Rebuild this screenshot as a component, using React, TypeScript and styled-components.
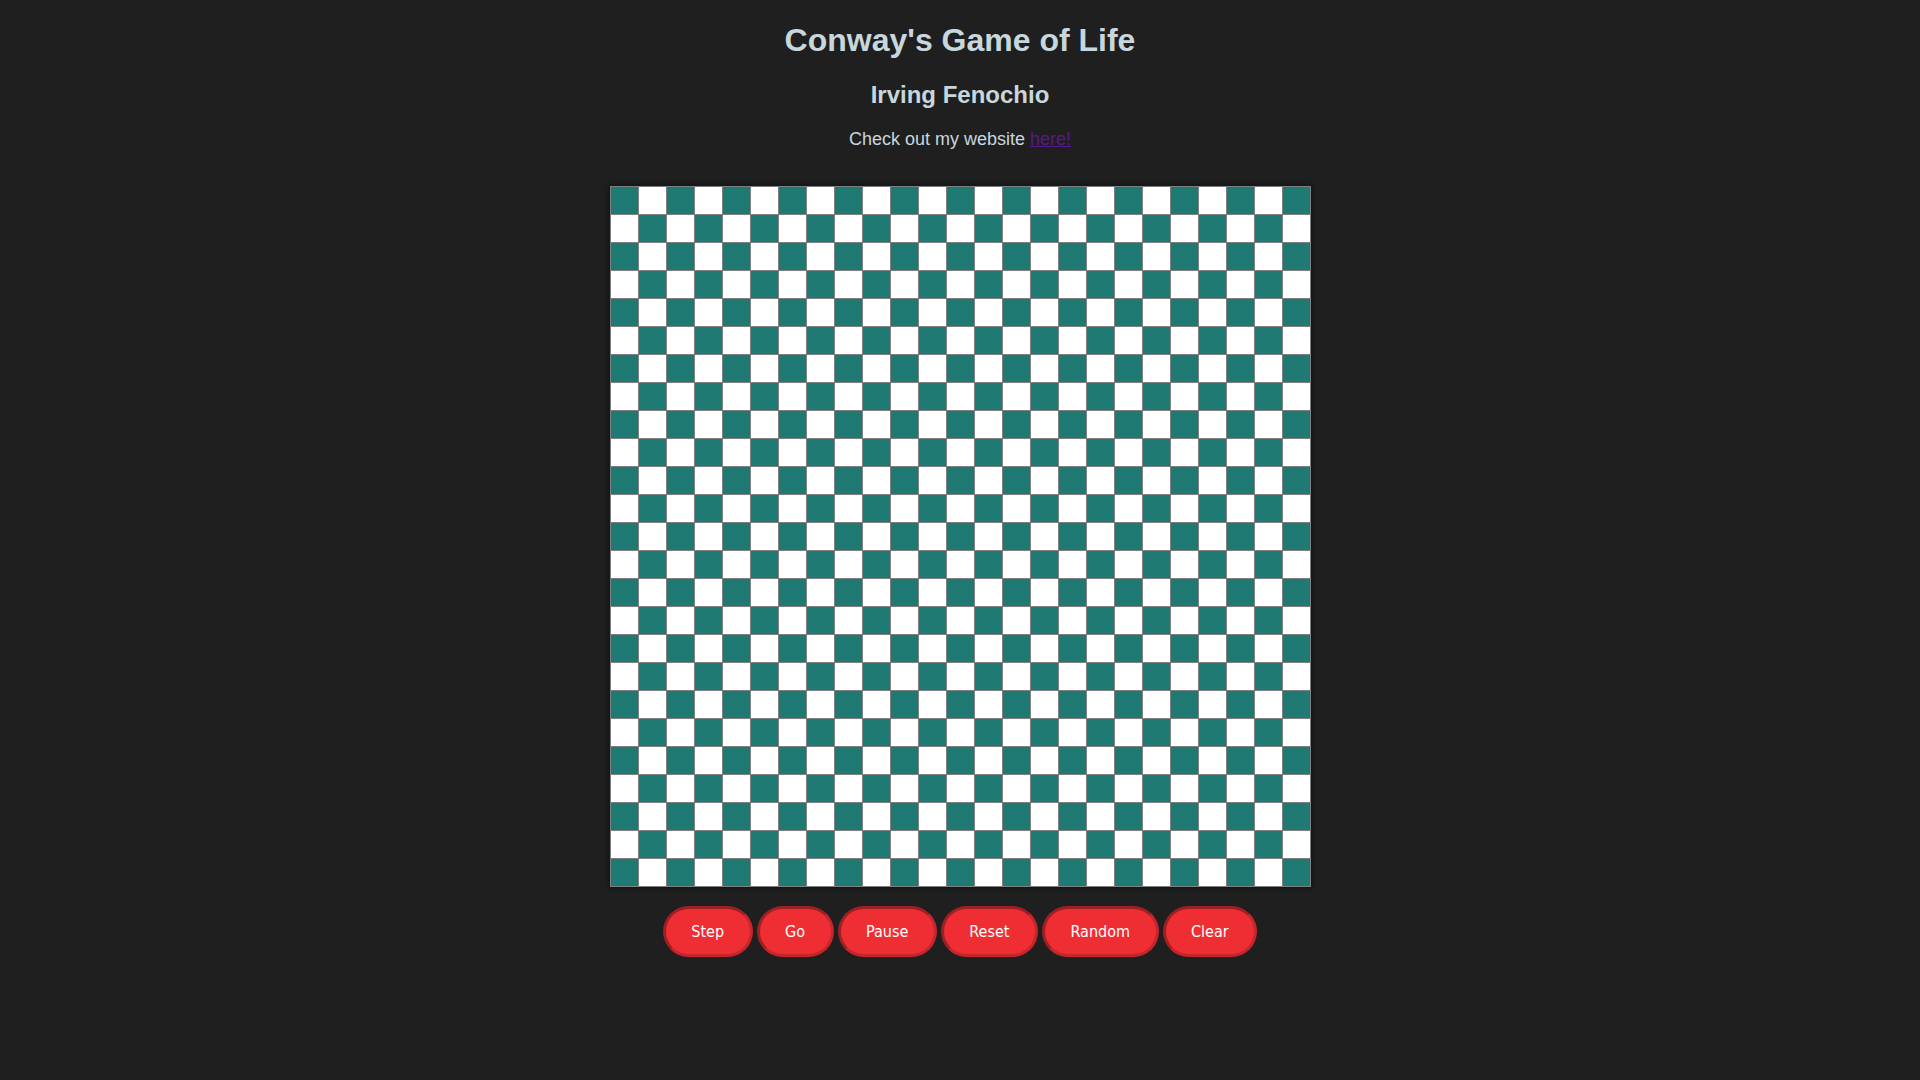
import styled, { createGlobalStyle } from "styled-components";

const SIZE = 25;

const GlobalStyle = createGlobalStyle`
  html, body {
    margin: 0;
    padding: 0;
    background-color: #1f1f1f;
  }
  body {
    min-height: 1080px;
    font-family: "Liberation Sans", Arial, sans-serif;
  }
`;

function App() {
  const cells = [];
  for (let r = 0; r < SIZE; r++) {
    for (let c = 0; c < SIZE; c++) {
      cells.push(<Cell key={`${r}-${c}`} alive={(r + c) % 2 === 0} />);
    }
  }

  return (
    <>
      <GlobalStyle />
      <StyledPage>
        <StyledTitle>Conway's Game of Life</StyledTitle>
        <StyledAuthor>Irving Fenochio</StyledAuthor>
        <StyledText>
          Check out my website <StyledLink href="#">here!</StyledLink>
        </StyledText>
        <StyledBoard>{cells}</StyledBoard>
        <StyledControls>
          <StyledButton>Step</StyledButton>
          <StyledButton>Go</StyledButton>
          <StyledButton>Pause</StyledButton>
          <StyledButton>Reset</StyledButton>
          <StyledButton>Random</StyledButton>
          <StyledButton>Clear</StyledButton>
        </StyledControls>
      </StyledPage>
    </>
  );
}

export default App;

const StyledPage = styled.div`
  display: flex;
  flex-direction: column;
  align-items: center;
  color: #c8d7de;
  padding-top: 22px;
`;

const StyledTitle = styled.h1`
  margin: 0;
  font-size: 32px;
  line-height: 37px;
  font-weight: bold;
`;

const StyledAuthor = styled.h2`
  margin: 22px 0 0;
  font-size: 24px;
  line-height: 28px;
  font-weight: bold;
`;

const StyledText = styled.p`
  margin: 20px 0 0;
  font-size: 18px;
  line-height: 21px;
`;

const StyledLink = styled.a`
  color: #551a8b;
  text-decoration: underline;
`;

const StyledBoard = styled.div`
  margin-top: 36px;
  display: grid;
  grid-template-columns: repeat(${SIZE}, 27px);
  grid-auto-rows: 27px;
  gap: 1px;
  padding: 1px;
  background-color: #808080;
  box-shadow: 0 0 4px 1px #081517;
`;

const Cell = styled.div<{ alive: boolean }>`
  background-color: ${(props) => (props.alive ? "#1e7a72" : "#ffffff")};
`;

const StyledControls = styled.div`
  margin-top: 19px;
  display: flex;
  gap: 4px;
`;

const StyledButton = styled.button`
  height: 51px;
  padding: 0 25.5px;
  border-radius: 26px;
  border: 3px solid;
  border-color: #9e1f24 #c5262c #c5262c #9e1f24;
  background-color: #ef2e33;
  color: #ffffff;
  font-family: "DejaVu Sans Condensed", "Liberation Sans Narrow", "DejaVu Sans", sans-serif;
  font-stretch: condensed;
  font-size: 16px;
  cursor: pointer;
`;
